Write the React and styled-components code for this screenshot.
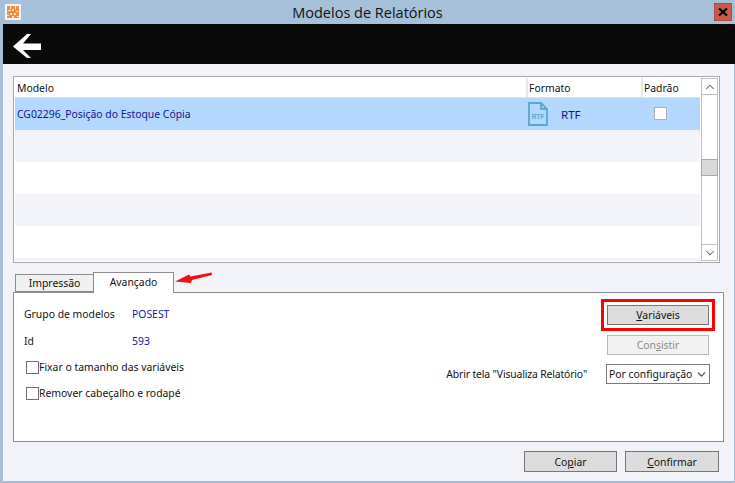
import React from 'react';
import styled, { createGlobalStyle } from 'styled-components';
import { ChevronUp, ChevronDown } from 'lucide-react';

const Global = createGlobalStyle`
	html, body {
		margin: 0;
		padding: 0;
		background: #a6c0da;
	}
	* {
		box-sizing: border-box;
	}
`;

const Window = styled.div`
	position: relative;
	width: 735px;
	height: 483px;
	overflow: hidden;
	display: flex;
	flex-direction: column;
	background: #a6c0da;
	padding-left: 3px;
	font-family: 'Noto Sans', 'Liberation Sans', sans-serif;
	font-size: 10.4px;
	color: #111;
`;

const TitleBar = styled.div`
	position: relative;
	height: 24px;
	flex: none;
	display: flex;
	align-items: center;
	justify-content: center;
	margin-left: -3px;
	font-family: 'Open Sans', 'Liberation Sans', sans-serif;
	font-size: 14.5px;
	color: #111;
`;

const AppIcon = styled.svg`
	position: absolute;
	left: 5px;
	top: 4px;
`;

const CloseButton = styled.div`
	position: absolute;
	right: 3px;
	top: 3px;
	width: 18px;
	height: 18px;
	display: flex;
	align-items: center;
	justify-content: center;
	background: #c75a4a;
	border: 1px solid #b04a40;
`;

const Toolbar = styled.div`
	height: 40px;
	flex: none;
	display: flex;
	align-items: center;
	padding: 3px 0 0 10px;
	background: #0a0a0a;
`;

const Body = styled.div`
	height: 418px;
	flex: none;
	display: flex;
	flex-direction: column;
	padding: 12px 0 0 10px;
	background: #f1f3f9;
	border-right: 1px solid #a6c0da;
	border-bottom: 1px solid #a6c0da;
`;

const GridBox = styled.div`
	width: 707px;
	height: 187px;
	flex: none;
	display: flex;
	border: 1px solid #a8a8a8;
	padding: 1px;
	background: #fff;
`;

const GridMain = styled.div`
	width: 687px;
	display: flex;
	flex-direction: column;
	overflow: hidden;
	background: #f1f3f9;
`;

const Columns = styled.div`
	display: grid;
	grid-template-columns: 513px 115px 59px;
`;

const HeaderRow = styled(Columns)`
	height: 20px;
	flex: none;
	background: #fff;
	border-bottom: 1px solid #e0e0e0;
`;

const HeaderCell = styled.div`
	display: flex;
	align-items: center;
	padding-left: 1px;
	border-right: 2px solid #e8e8e8;
	color: #111;

	&:first-child {
		padding-left: 2px;
	}

	&:last-child {
		border-right: none;
	}
`;

const Row = styled(Columns)`
	height: 32px;
	flex: none;
	background: ${props =>
		props.selected ? '#b3d7ff' : props.alt ? '#f1f3f9' : '#fff'};
`;

const Cell = styled.div`
	display: flex;
	align-items: center;
	padding-left: 2px;
	color: #14148c;
`;

const FormatCell = styled(Cell)`
	gap: 13px;
	padding-left: 0;
	font-size: 11.500px;
`;

const CheckCell = styled(Cell)`
	padding: 0 0 2px 11px;
`;

const CheckBox = styled.span`
	display: block;
	width: ${props => props.size}px;
	height: ${props => props.size}px;
	flex: none;
	background: #fff;
	border: 1px solid ${props => props.color};
`;

const Scrollbar = styled.div`
	width: 17px;
	margin-left: 1px;
	display: flex;
	flex-direction: column;
	justify-content: space-between;
	border: 1px solid #c0c0c0;
	background: #fff;
	position: relative;
`;

const ScrollButton = styled.div`
	height: 16px;
	display: flex;
	align-items: center;
	justify-content: center;
	color: #606060;
	border-${props => props.edge}: 1px solid #c0c0c0;
`;

const ScrollThumb = styled.div`
	position: absolute;
	left: -1px;
	right: -1px;
	top: 80px;
	height: 17px;
	background: #d9d9d9;
	border: 1px solid #a8a8a8;
`;

const TabStrip = styled.div`
	display: flex;
	align-items: flex-end;
	height: 21px;
	margin-top: 8px;
	padding-left: 2px;
	flex: none;
	position: relative;
	z-index: 1;
`;

const Tab = styled.div`
	display: flex;
	align-items: center;
	justify-content: center;
	width: ${props => (props.active ? '81px' : '78px')};
	height: ${props => (props.active ? '21px' : '18px')};
	margin-bottom: ${props => (props.active ? '-1px' : '0')};
	padding-bottom: ${props => (props.active ? '3px' : '0')};
	background: ${props => (props.active ? '#fff' : '#f0f0f0')};
	border: 1px solid #8c8c8c;
	border-bottom: ${props => (props.active ? 'none' : '1px solid #8c8c8c')};
	border-right: ${props => (props.active ? '1px solid #8c8c8c' : 'none')};
`;

const Panel = styled.div`
	width: 711px;
	height: 150px;
	flex: none;
	display: flex;
	justify-content: space-between;
	background: #fff;
	border: 1px solid #8c8c8c;
	padding: 8px 14px 0 10px;
`;

const LeftColumn = styled.div`
	display: flex;
	flex-direction: column;
`;

const InfoRow = styled.div`
	display: grid;
	grid-template-columns: 108px auto;
	align-items: center;
	height: 26px;

	& + & {
		margin-top: 1px;
	}
`;

const InfoValue = styled.span`
	color: #1414b4;
`;

const CheckRow = styled.label`
	display: flex;
	align-items: center;
	height: 26px;
	padding-left: 2px;
`;

const RightColumn = styled.div`
	display: flex;
	flex-direction: column;
	align-items: flex-end;
	padding-top: 4px;
`;

const Button = styled.div`
	display: flex;
	align-items: center;
	justify-content: center;
	width: ${props => props.width}px;
	height: ${props => (props.tall ? 21 : 20)}px;
	background: ${props => (props.disabled ? '#f1f1f1' : '#dcdcdc')};
	border: 1px solid ${props => (props.disabled ? '#b8b8b8' : '#767676')};
	color: ${props => (props.disabled ? '#8a8a8a' : '#111')};
	outline: ${props => (props.marked ? '3px solid #f00' : 'none')};
	outline-offset: 3px;
`;

const Underlined = styled.span`
	text-decoration: underline;
`;

const ConsistirButton = styled(Button)`
	margin-top: 10px;
`;

const SelectRow = styled.div`
	display: flex;
	align-items: center;
	margin-top: 9px;
	margin-right: -1px;
	gap: 19px;
`;

const SelectLabel = styled.span`
	letter-spacing: -0.15px;
`;

const FakeSelect = styled.div`
	width: 104px;
	height: 20px;
	display: flex;
	align-items: center;
	justify-content: space-between;
	padding: 0 1px 0 2px;
	border: 1px solid #7a7a7a;
	background: #fff;
	white-space: nowrap;
`;

const Footer = styled.div`
	display: flex;
	justify-content: flex-end;
	gap: 8px;
	margin-top: 9px;
	padding-right: 1px;
	width: 707px;
`;

const Annotation = styled.svg`
	position: absolute;
	left: 174px;
	top: 270px;
	z-index: 2;
`;

const AppLogo = () => (
	<AppIcon width="16" height="16" viewBox="0 0 16 16">
		<rect width="16" height="16" fill="#f4f4f6" />
		<rect x="2" y="2" width="12" height="12" fill="#f78a3c" />
		<g fill="#fbe3cf">
			<rect x="5" y="2" width="1" height="3" />
			<rect x="10" y="2" width="1" height="3" />
			<rect x="3" y="6" width="3" height="1" />
			<rect x="7" y="5" width="2" height="2" />
			<rect x="11" y="7" width="2" height="1" />
			<rect x="5" y="9" width="2" height="2" />
			<rect x="9" y="9" width="2" height="2" />
			<rect x="2" y="11" width="2" height="1" />
			<rect x="7" y="12" width="2" height="2" />
			<rect x="12" y="12" width="2" height="1" />
		</g>
	</AppIcon>
);

const RtfIcon = () => (
	<svg width="20" height="24" viewBox="0 0 20 24">
		<path
			d="M1 1h12l6 6v16H1z M13 1v6h6"
			fill="none"
			stroke="#5ba6cf"
			strokeWidth="1.800"
		/>
		<text
			x="10"
			y="17"
			textAnchor="middle"
			fontSize="6.500"
			fontWeight="700"
			fontFamily="Liberation Sans, sans-serif"
			fill="#5ba6cf"
		>
			RTF
		</text>
	</svg>
);

const rows = [true, false, true, false, true, false];

export default function App() {
	return (
		<Window>
			<Global />
			<TitleBar>
				<AppLogo />
				Modelos de Relatórios
				<CloseButton>
					<svg width="10" height="8" viewBox="0 0 10 8">
						<path d="M1 0.5l8 7M9 0.5l-8 7" stroke="#000" strokeWidth="2.2" />
					</svg>
				</CloseButton>
			</TitleBar>
			<Toolbar>
				<svg width="28" height="24" viewBox="0 0 28 24">
					<path d="M0 12.500L14 0h4L10 9.500h18v6.500H10l8 8h-4z" fill="#fff" />
				</svg>
			</Toolbar>
			<Body>
				<GridBox>
					<GridMain>
						<HeaderRow>
							<HeaderCell>Modelo</HeaderCell>
							<HeaderCell>Formato</HeaderCell>
							<HeaderCell>Padrão</HeaderCell>
						</HeaderRow>
						<Row selected>
							<Cell>CG02296_Posição do Estoque Cópia</Cell>
							<FormatCell>
								<RtfIcon />
								RTF
							</FormatCell>
							<CheckCell>
								<CheckBox size={13} color="#b0b0b0" />
							</CheckCell>
						</Row>
						{rows.map((alt, i) => (
							<Row key={i} alt={alt} />
						))}
					</GridMain>
					<Scrollbar>
						<ScrollButton edge="bottom">
							<ChevronUp size={14} strokeWidth={1.8} />
						</ScrollButton>
						<ScrollThumb />
						<ScrollButton edge="top">
							<ChevronDown size={14} strokeWidth={1.8} />
						</ScrollButton>
					</Scrollbar>
				</GridBox>
				<TabStrip>
					<Tab>Impressão</Tab>
					<Tab active>Avançado</Tab>
				</TabStrip>
				<Panel>
					<LeftColumn>
						<InfoRow>
							Grupo de modelos
							<InfoValue>POSEST</InfoValue>
						</InfoRow>
						<InfoRow>
							Id
							<InfoValue>593</InfoValue>
						</InfoRow>
						<CheckRow>
							<CheckBox size={13} color="#707070" />
							Fixar o tamanho das variáveis
						</CheckRow>
						<CheckRow>
							<CheckBox size={13} color="#707070" />
							Remover cabeçalho e rodapé
						</CheckRow>
					</LeftColumn>
					<RightColumn>
						<Button width={102} marked>
							<span>
								<Underlined>V</Underlined>ariáveis
							</span>
						</Button>
						<ConsistirButton width={102} disabled>
							<span>
								Con<Underlined>s</Underlined>istir
							</span>
						</ConsistirButton>
						<SelectRow>
							<SelectLabel>Abrir tela "Visualiza Relatório"</SelectLabel>
							<FakeSelect>
								Por configuração
								<ChevronDown size={13} strokeWidth={2.6} color="#555" />
							</FakeSelect>
						</SelectRow>
					</RightColumn>
				</Panel>
				<Footer>
					<Button width={93} tall>
						<span>
							Co<Underlined>p</Underlined>iar
						</span>
					</Button>
					<Button width={94} tall>
						<span>
							<Underlined>C</Underlined>onfirmar
						</span>
					</Button>
				</Footer>
			</Body>
			<Annotation width="40" height="14" viewBox="0 0 40 14">
				<path d="M1 11.500L15 4.500l1.500 2L37.500 2.500l0.500 2.500L18 10l-1 3z" fill="#f01010" />
			</Annotation>
		</Window>
	);
}
